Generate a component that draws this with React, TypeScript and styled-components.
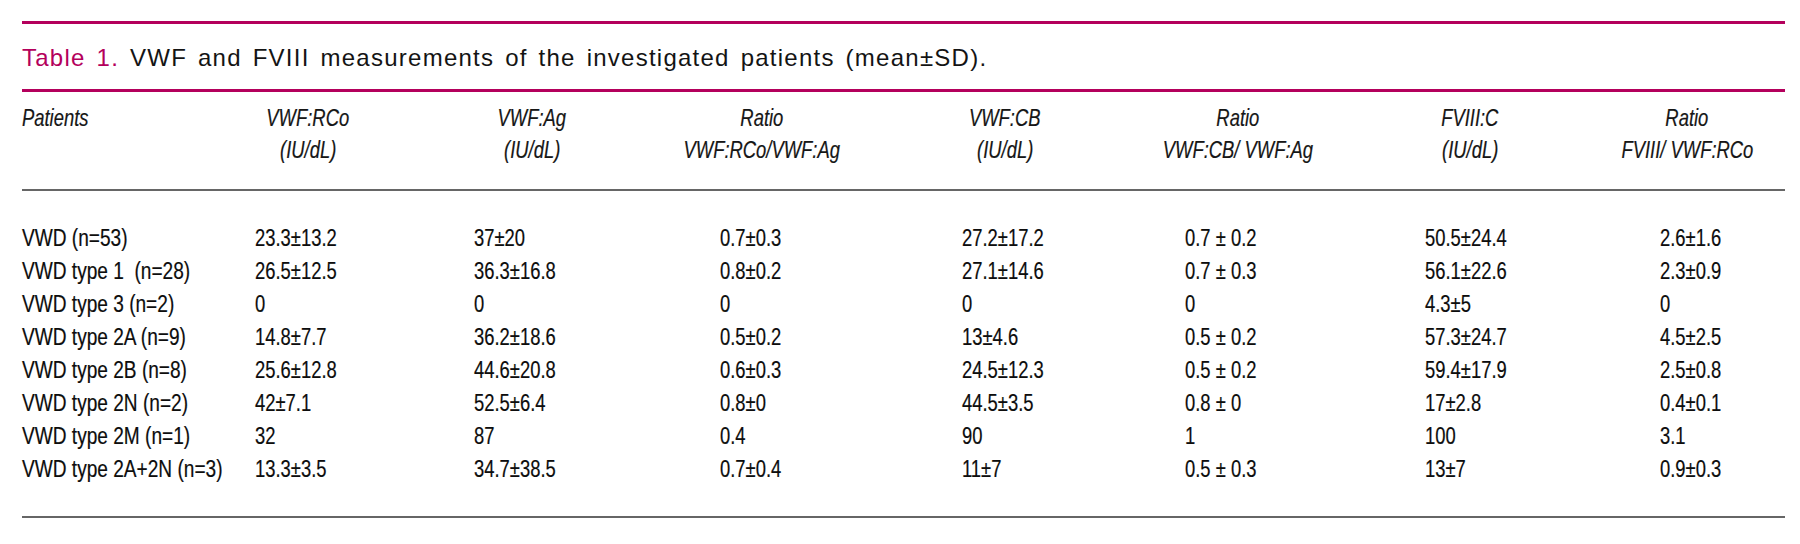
import * as React from "react";
import styled, { createGlobalStyle } from "styled-components";

const GlobalStyle = createGlobalStyle`
  body {
    margin: 0;
    background: #ffffff;
  }
`;

const MAGENTA = "#b4005c";
const COLUMNS = "233px 219px 246px 242px 223px 240px 235px 1fr";
const SANS = `"Liberation Sans", Arial, sans-serif`;

const Page = styled.div`
  width: 1763px;
  padding: 21px 0 0 22px;
`;

const RuleMagenta = styled.div`
  height: 3px;
  background: ${MAGENTA};
`;

const RuleGray = styled.div`
  height: 2px;
  background: #666666;
`;

const Caption = styled.div`
  padding: 19px 0 16px;
  font-family: ${SANS};
  font-size: 24px;
  line-height: 30px;
  letter-spacing: 1.25px;
  word-spacing: 3px;
  color: #141414;
`;

const CaptionLabel = styled.span`
  color: ${MAGENTA};
`;

const HeadRow = styled.div`
  display: grid;
  grid-template-columns: ${COLUMNS};
  padding: 10px 0 23px;
  font-family: ${SANS};
  font-style: italic;
  font-size: 23px;
  line-height: 32px;
  color: #161616;
  -webkit-text-stroke: 0.2px currentColor;
`;

const HeadCell = styled.div<{ span?: number }>`
  display: flex;
  flex-direction: column;
  align-items: ${({ span }) => (span ? "center" : "flex-start")};
  width: ${({ span }) => (span ? `${span}px` : "auto")};
  white-space: nowrap;
`;

/* the print face is a condensed grotesque: squeeze Liberation Sans to its width */
const Squeeze = styled.span<{ origin?: string; amount?: number }>`
  display: inline-block;
  white-space: pre;
  transform: scaleX(${({ amount }) => amount || 0.8});
  transform-origin: ${({ origin }) => origin || "left"} center;
`;

const Body = styled.div`
  padding: 31px 0 30px;
`;

const Row = styled.div`
  display: grid;
  grid-template-columns: ${COLUMNS};
  font-family: ${SANS};
  font-size: 23px;
  line-height: 33px;
  color: #0d0d0d;
  -webkit-text-stroke: 0.2px currentColor;
`;

const Cell = styled.div`
  white-space: pre;
`;

const headers: { lines: string[]; span?: number }[] = [
  { lines: ["Patients"] },
  { lines: ["VWF:RCo", "(IU/dL)"], span: 106 },
  { lines: ["VWF:Ag", "(IU/dL)"], span: 116 },
  { lines: ["Ratio", "VWF:RCo/VWF:Ag"], span: 84 },
  { lines: ["VWF:CB", "(IU/dL)"], span: 86 },
  { lines: ["Ratio", "VWF:CB/ VWF:Ag"], span: 106 },
  { lines: ["FVIII:C", "(IU/dL)"], span: 90 },
  { lines: ["Ratio", "FVIII/ VWF:RCo"], span: 54 },
];

const rows: string[][] = [
  ["VWD (n=53)", "23.3±13.2", "37±20", "0.7±0.3", "27.2±17.2", "0.7 ± 0.2", "50.5±24.4", "2.6±1.6"],
  ["VWD type 1  (n=28)", "26.5±12.5", "36.3±16.8", "0.8±0.2", "27.1±14.6", "0.7 ± 0.3", "56.1±22.6", "2.3±0.9"],
  ["VWD type 3 (n=2)", "0", "0", "0", "0", "0", "4.3±5", "0"],
  ["VWD type 2A (n=9)", "14.8±7.7", "36.2±18.6", "0.5±0.2", "13±4.6", "0.5 ± 0.2", "57.3±24.7", "4.5±2.5"],
  ["VWD type 2B (n=8)", "25.6±12.8", "44.6±20.8", "0.6±0.3", "24.5±12.3", "0.5 ± 0.2", "59.4±17.9", "2.5±0.8"],
  ["VWD type 2N (n=2)", "42±7.1", "52.5±6.4", "0.8±0", "44.5±3.5", "0.8 ± 0", "17±2.8", "0.4±0.1"],
  ["VWD type 2M (n=1)", "32", "87", "0.4", "90", "1", "100", "3.1"],
  ["VWD type 2A+2N (n=3)", "13.3±3.5", "34.7±38.5", "0.7±0.4", "11±7", "0.5 ± 0.3", "13±7", "0.9±0.3"],
];

export default function App() {
  return (
    <Page>
      <GlobalStyle />
      <RuleMagenta />
      <Caption>
        <CaptionLabel>Table 1.</CaptionLabel> VWF and FVIII measurements of the
        investigated patients (mean±SD).
      </Caption>
      <RuleMagenta />
      <HeadRow>
        {headers.map((h, i) => (
          <HeadCell key={i} span={h.span}>
            {h.lines.map((l) => (
              <Squeeze key={l} origin={h.span ? "center" : "left"}>
                {l}
              </Squeeze>
            ))}
          </HeadCell>
        ))}
      </HeadRow>
      <RuleGray />
      <Body>
        {rows.map((r, i) => (
          <Row key={i}>
            {r.map((c, j) => (
              <Cell key={j}>
                <Squeeze amount={j === 0 ? 0.83 : 0.8}>{c}</Squeeze>
              </Cell>
            ))}
          </Row>
        ))}
      </Body>
      <RuleGray />
    </Page>
  );
}
